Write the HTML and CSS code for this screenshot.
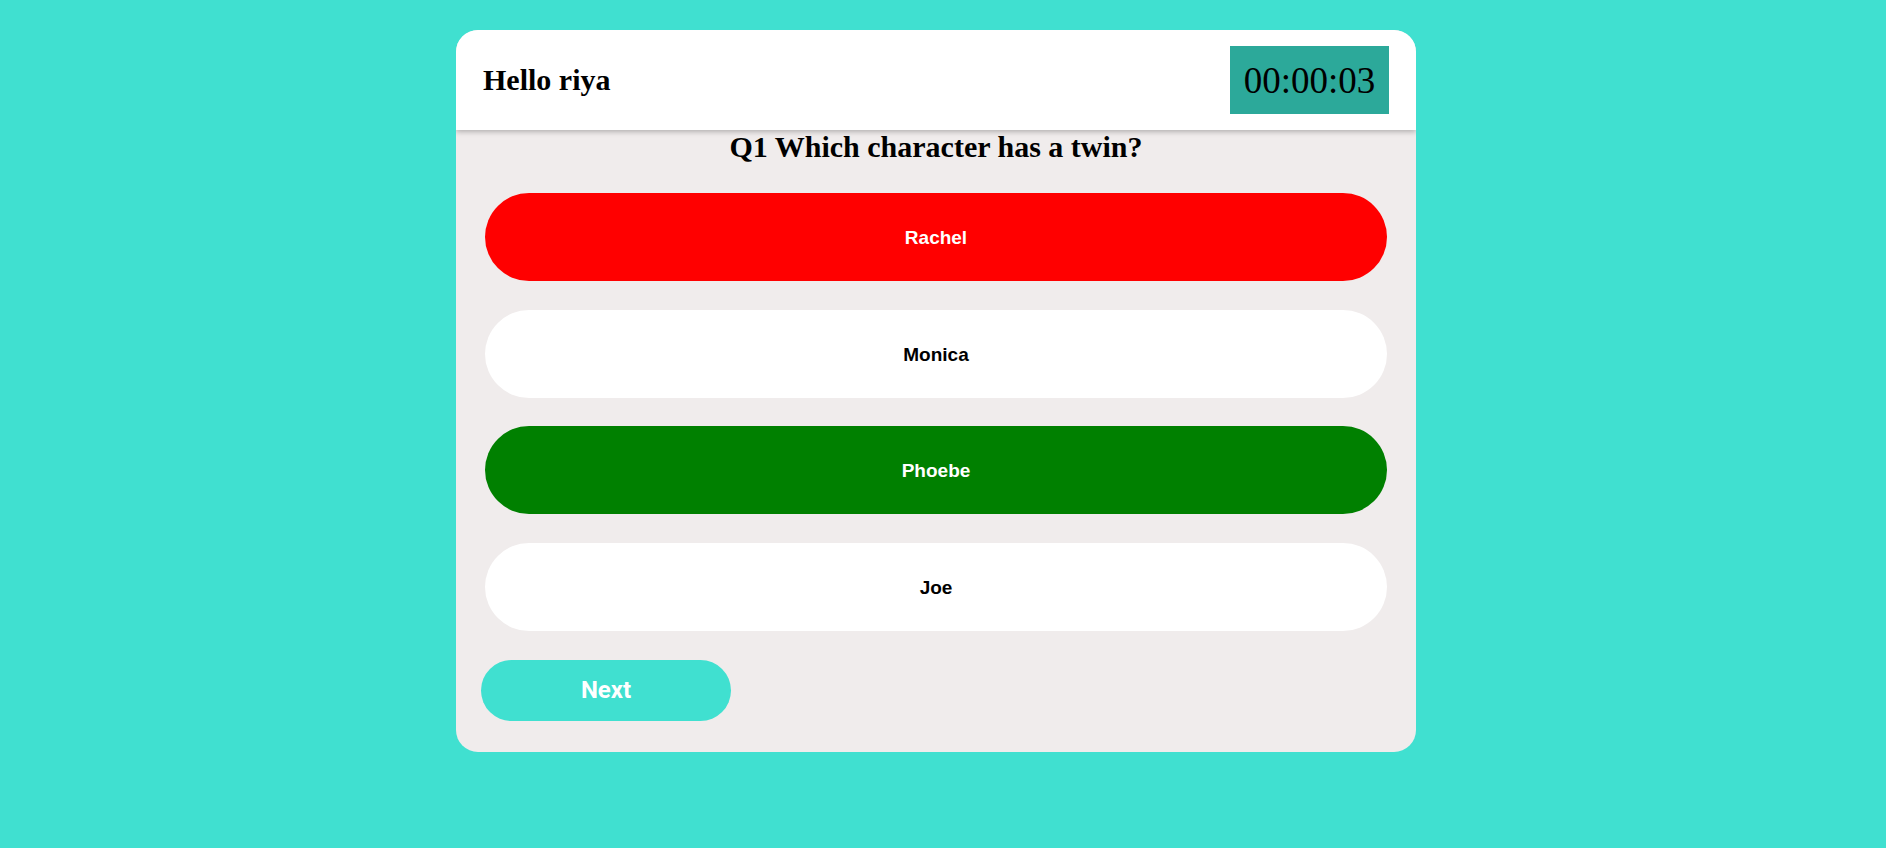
FILE: index.html
```html
<!DOCTYPE html>
<html>
<head>
<meta charset="utf-8">
<link rel="stylesheet" href="styles.css">
</head>
<body>
<div class="page">
  <div class="card">
    <div class="header">
      <div class="hello">Hello riya</div>
      <div class="timer">00:00:03</div>
    </div>
    <div class="question">Q1 Which character has a twin?</div>
    <div class="options">
      <div class="option wrong">Rachel</div>
      <div class="option">Monica</div>
      <div class="option right">Phoebe</div>
      <div class="option">Joe</div>
    </div>
    <div class="footer">
      <button class="next">Next</button>
    </div>
  </div>
</div>
</body>
</html>
```
FILE: styles.css
```css
html, body {
  margin: 0;
  padding: 0;
  background: #40e0d0;
  height: 100%;
}
.page {
  display: flex;
  justify-content: center;
  padding: 30px 14px 0 0;
}
.card {
  width: 960px;
  height: 722px;
  background: #f0ecec;
  border-radius: 22px;
  overflow: hidden;
  display: flex;
  flex-direction: column;
}
.header {
  height: 100px;
  box-sizing: border-box;
  background: #ffffff;
  display: flex;
  align-items: center;
  justify-content: space-between;
  padding: 0 27px 0 27px;
  box-shadow: 0 2px 5px rgba(0,0,0,0.25);
  position: relative;
  z-index: 1;
}
.hello {
  font-family: "Liberation Serif", "Times New Roman", serif;
  font-weight: bold;
  font-size: 30px;
  color: #000;
}
.timer {
  background: #2ca99a;
  width: 159px;
  height: 68px;
  display: flex;
  align-items: center;
  justify-content: center;
  font-family: "Liberation Serif", "Times New Roman", serif;
  font-size: 37px;
  color: #000;
}
.question {
  font-family: "Liberation Serif", "Times New Roman", serif;
  font-weight: bold;
  font-size: 30px;
  text-align: center;
  color: #000;
  line-height: 33px;
  margin-top: 0;
}
.options {
  display: flex;
  flex-direction: column;
  gap: 28.6px;
  padding: 30px 29px 0 29px;
}
.option {
  height: 88px;
  border-radius: 44px;
  background: #ffffff;
  color: #000;
  display: flex;
  align-items: center;
  justify-content: center;
  padding-top: 2px;
  box-sizing: border-box;
  font-family: "Comic Sans MS", "Liberation Sans", sans-serif;
  font-weight: bold;
  font-size: 19px;
}
.option.wrong {
  background: #ff0000;
  color: #fff;
}
.option.right {
  background: #008000;
  color: #fff;
}
.footer {
  padding: 29px 25px 0 25px;
}
.next {
  width: 250px;
  height: 61px;
  border: none;
  border-radius: 31px;
  background: #40e0d0;
  color: #fff;
  font-family: "Roboto", "Liberation Sans", sans-serif;
  font-weight: bold;
  font-size: 24px;
  padding: 0;
}
```
